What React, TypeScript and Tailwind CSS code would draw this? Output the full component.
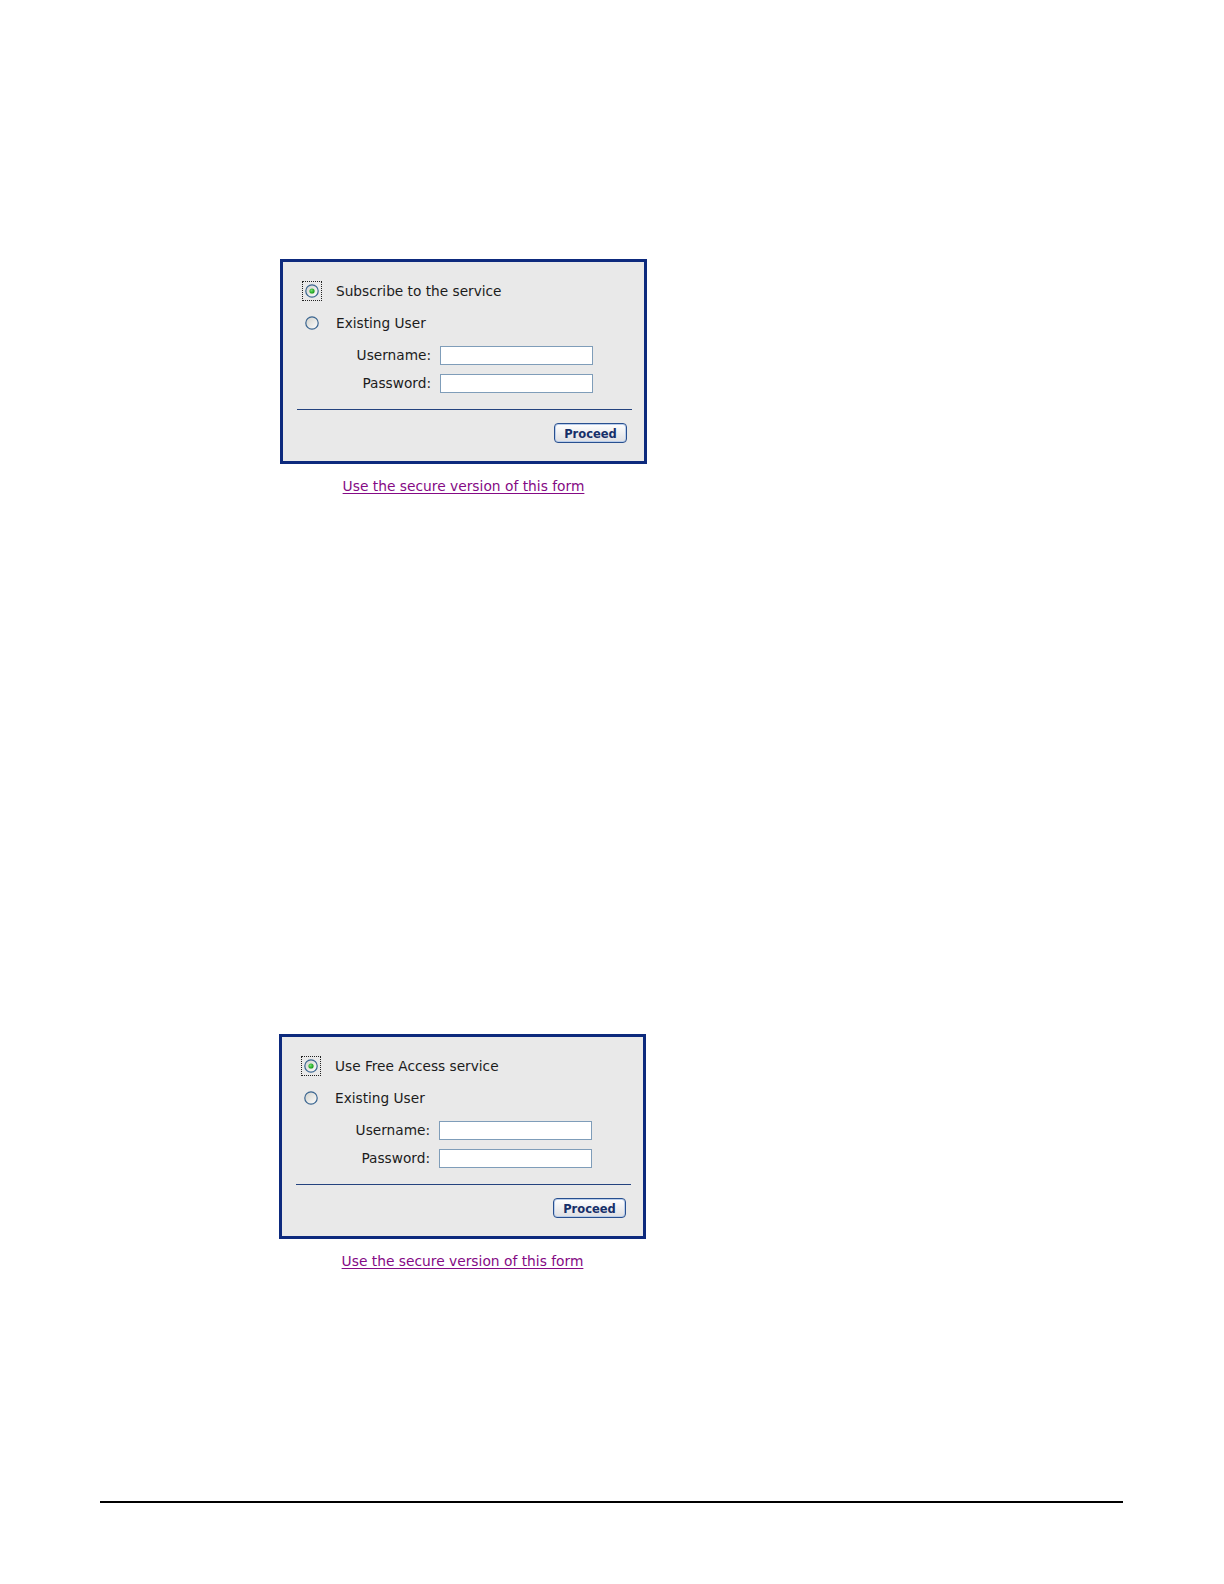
import React from "react";

function Radio({ checked }: { checked: boolean }) {
  return (
    <svg width="14" height="14" viewBox="0 0 14 14">
      <defs>
        <linearGradient id={checked ? "rgA" : "rgB"} x1="0" y1="0" x2="1" y2="1">
          <stop offset="0" stopColor="#d0d0ca" />
          <stop offset="1" stopColor="#ffffff" />
        </linearGradient>
        <radialGradient id={checked ? "dotA" : "dotB"} cx="0.4" cy="0.4" r="0.6">
          <stop offset="0" stopColor="#6ee06e" />
          <stop offset="1" stopColor="#149a14" />
        </radialGradient>
      </defs>
      <circle cx="7" cy="7" r="6.2" fill={`url(#${checked ? "rgA" : "rgB"})`} stroke="#3a6590" strokeWidth="1.2" />
      {checked && <circle cx="7" cy="7" r="2.6" fill={`url(#${checked ? "dotA" : "dotB"})`} />}
    </svg>
  );
}

function LoginBox({ first, boxClass }: { first: string; boxClass: string }) {
  return (
    <div className={boxClass}>
      <div className="w-[367px] h-[205px] border-[3px] border-[#0d2a7d] bg-[#e9e9e9] flex flex-col pt-[19px] text-[#1c1c1c]">
        <div className="flex items-center h-[20px]">
          <div className="ml-[19px] w-[20px] h-[20px] border border-dotted border-[#222] flex items-center justify-center">
            <Radio checked />
          </div>
          <span className="ml-[14px] text-[13.7px] leading-[20px]">{first}</span>
        </div>
        <div className="flex items-center h-[20px] mt-[12px]">
          <div className="ml-[19px] w-[20px] h-[20px] flex items-center justify-center">
            <Radio checked={false} />
          </div>
          <span className="ml-[14px] text-[13.7px] leading-[20px]">Existing User</span>
        </div>
        <div className="flex items-center h-[19px] mt-[13px]">
          <span className="w-[148px] text-right text-[13.7px] leading-[19px]">Username:</span>
          <div className="ml-[9px] w-[153px] h-[19px] bg-white border border-[#7f9db9]" />
        </div>
        <div className="flex items-center h-[19px] mt-[9px]">
          <span className="w-[148px] text-right text-[13.7px] leading-[19px]">Password:</span>
          <div className="ml-[9px] w-[153px] h-[19px] bg-white border border-[#7f9db9]" />
        </div>
        <div className="mt-[16px] ml-[14px] mr-[12px] h-px bg-[#24437f]" />
        <div className="flex justify-end mt-[13px] pr-[17px]">
          <div className="w-[73px] h-[20px] rounded-[4px] border border-[#284f8f] bg-linear-to-b from-white to-[#dedfe3] shadow-[inset_0_0_0_1px_#b9cdea] flex items-center justify-center pt-[2px]">
            <span className="text-[11.5px] font-bold text-[#17306a] leading-[14px]">Proceed</span>
          </div>
        </div>
      </div>
      <div className="w-[367px] flex justify-center mt-[14px]">
        <a href="#" className="text-[13.8px] leading-[16px] text-[#850a85] underline underline-offset-2">
          Use the secure version of this form
        </a>
      </div>
    </div>
  );
}

export default function App() {
  return (
    <div className="min-h-[1584px] bg-white" style={{ fontFamily: '"DejaVu Sans", Verdana, sans-serif' }}>
      <div className="pt-[259px]">
        <LoginBox first="Subscribe to the service" boxClass="ml-[280px]" />
        <div className="h-[540px]" />
        <LoginBox first="Use Free Access service" boxClass="ml-[279px]" />
        <div className="mt-[232px] ml-[100px] w-[1023px] h-[2px] bg-black" />
      </div>
    </div>
  );
}
